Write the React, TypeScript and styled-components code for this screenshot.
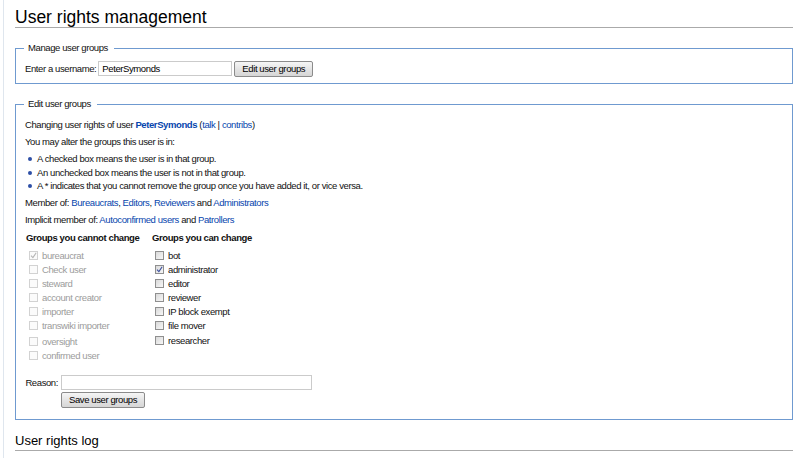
import React from "react";
import styled, { createGlobalStyle } from "styled-components";

const Global = createGlobalStyle`
  html, body { margin: 0; padding: 0; background: #fff; }
  body {
    font-family: "Liberation Sans", Arial, sans-serif;
    font-size: 9.5px;
    letter-spacing: -0.4px;
    color: #111;
  }
`;

const Page = styled.div`
  margin-left: 3px;
  border-left: 1px solid #dfe6ee;
  padding: 0 7px 0 11px;
  min-height: 100vh;
  box-sizing: border-box;
`;

const Title = styled.h1`
  margin: 0;
  padding-top: 7px;
  font-size: 17.5px;
  line-height: 20px;
  font-weight: normal;
  letter-spacing: 0;
  color: #000;
  border-bottom: 1px solid #aaa;
`;

const SubTitle = styled.h2`
  margin: 13px 0 0;
  padding-bottom: 1px;
  font-size: 13px;
  line-height: 16px;
  font-weight: normal;
  letter-spacing: 0;
  color: #000;
  border-bottom: 1px solid #aaa;
`;

const Fieldset = styled.fieldset<{ $pb: number }>`
  margin: 14px 0 0;
  padding: 6px 9px ${(p) => p.$pb}px 9px;
  border: 1px solid #6f9ad0;
  min-width: 0;
`;

const Legend = styled.legend`
  padding: 0 6px 0 4px;
  margin-left: -1px;
  line-height: 12px;
`;

const InlineRow = styled.div`
  display: flex;
  align-items: center;
  height: 17px;
`;

const Label = styled.label`
  margin-right: 2px;
  white-space: nowrap;
`;

const TextInput = styled.input<{ $w: number }>`
  box-sizing: border-box;
  width: ${(p) => p.$w}px;
  height: 15px;
  border: 1px solid #cbcbcb;
  padding: 0 3px;
  margin: 0;
  font-family: "Liberation Sans", Arial, sans-serif;
  font-size: 9.5px;
  letter-spacing: -0.4px;
  color: #000;
  background: #fff;
  outline: none;
`;

const Button = styled.button`
  box-sizing: border-box;
  height: 16px;
  padding: 0 7px;
  margin: 0 0 0 2px;
  border: 1px solid #8b8b8b;
  border-radius: 2px;
  background: linear-gradient(#f6f6f6, #e4e4e4 50%, #d6d6d6);
  font-family: "Liberation Sans", Arial, sans-serif;
  font-size: 9.5px;
  letter-spacing: -0.4px;
  color: #000;
  line-height: 14px;
  white-space: nowrap;
`;

const Para = styled.p<{ $top?: number }>`
  margin: ${(p) => p.$top ?? 0}px 0 3.5px;
  line-height: 13.5px;
`;

const List = styled.ul`
  margin: 0 0 3.5px;
  padding: 0 0 0 12px;
  list-style: none;
`;

const Item = styled.li`
  position: relative;
  line-height: 13.5px;
  &::before {
    content: "";
    position: absolute;
    left: -9px;
    top: 5px;
    width: 4px;
    height: 4px;
    border-radius: 50%;
    background: #2d4fa6;
  }
`;

const Link = styled.a<{ $bold?: boolean }>`
  color: #0645ad;
  text-decoration: none;
  font-weight: ${(p) => (p.$bold ? "bold" : "normal")};
  cursor: pointer;
`;

const Groups = styled.div`
  display: grid;
  grid-template-columns: 126px auto;
  margin-top: 4.5px;
  padding-left: 1px;
`;

const Column = styled.div`
  display: flex;
  flex-direction: column;
`;

const ColumnHead = styled.div`
  font-weight: bold;
  line-height: 14px;
  margin-bottom: 3px;
  white-space: nowrap;
`;

const GroupRow = styled.div<{ $extra?: number; $disabled?: boolean }>`
  display: flex;
  align-items: center;
  height: 14px;
  margin-top: ${(p) => p.$extra ?? 0}px;
  color: ${(p) => (p.$disabled ? "#9c9c9c" : "#111")};
  white-space: nowrap;
`;

const Box = styled.span<{ $disabled?: boolean }>`
  box-sizing: border-box;
  width: 9px;
  height: 9px;
  margin: 0 4px 0 3px;
  flex: none;
  display: inline-flex;
  align-items: center;
  justify-content: center;
  border: 1px solid ${(p) => (p.$disabled ? "#d2d2d2" : "#8f8f8f")};
  background: ${(p) =>
    p.$disabled ? "#fbfbfb" : "linear-gradient(135deg, #d9d9d9, #f7f7f7)"};
`;

const ReasonGrid = styled.div`
  display: grid;
  grid-template-columns: 33px 251px;
  column-gap: 3px;
  row-gap: 2px;
  margin-top: 13px;
  align-items: center;
`;

const ReasonLabel = styled.label`
  justify-self: end;
`;

const SaveCell = styled.div`
  grid-column: 2;
  display: flex;
  & > button {
    margin-left: 0;
  }
`;

function Check({ checked, disabled }: { checked?: boolean; disabled?: boolean }) {
  return (
    <Box $disabled={disabled}>
      {checked && (
        <svg width="7" height="7" viewBox="0 0 7 7">
          <path
            d="M1 3.6 L2.9 5.6 L6.2 0.8"
            fill="none"
            stroke={disabled ? "#b5b5b5" : "#3b4f9e"}
            strokeWidth="1.1"
          />
        </svg>
      )}
    </Box>
  );
}

const cannot: { name: string; checked?: boolean }[] = [
  { name: "bureaucrat", checked: true },
  { name: "Check user" },
  { name: "steward" },
  { name: "account creator" },
  { name: "importer" },
  { name: "transwiki importer" },
  { name: "oversight" },
  { name: "confirmed user" },
];

const can: { name: string; checked?: boolean }[] = [
  { name: "bot" },
  { name: "administrator", checked: true },
  { name: "editor" },
  { name: "reviewer" },
  { name: "IP block exempt" },
  { name: "file mover" },
  { name: "researcher" },
];

export default function App() {
  return (
    <>
      <Global />
      <Page>
        <Title>User rights management</Title>

        <Fieldset $pb={6}>
          <Legend>Manage user groups</Legend>
          <InlineRow>
            <Label>Enter a username:</Label>
            <TextInput $w={134} defaultValue="PeterSymonds" />
            <Button>Edit user groups</Button>
          </InlineRow>
        </Fieldset>

        <Fieldset $pb={11}>
          <Legend>Edit user groups</Legend>
          <Para $top={2}>
            Changing user rights of user <Link $bold>PeterSymonds</Link> (
            <Link>talk</Link> | <Link>contribs</Link>)
          </Para>
          <Para>You may alter the groups this user is in:</Para>
          <List>
            <Item>A checked box means the user is in that group.</Item>
            <Item>An unchecked box means the user is not in that group.</Item>
            <Item>
              A * indicates that you cannot remove the group once you have added it, or vice
              versa.
            </Item>
          </List>
          <Para>
            Member of: <Link>Bureaucrats</Link>, <Link>Editors</Link>, <Link>Reviewers</Link> and{" "}
            <Link>Administrators</Link>
          </Para>
          <Para>
            Implicit member of: <Link>Autoconfirmed users</Link> and <Link>Patrollers</Link>
          </Para>

          <Groups>
            <Column>
              <ColumnHead>Groups you cannot change</ColumnHead>
              {cannot.map((g, i) => (
                <GroupRow key={g.name} $disabled $extra={i === 6 ? 2 : 0}>
                  <Check checked={g.checked} disabled />
                  {g.name}
                </GroupRow>
              ))}
            </Column>
            <Column>
              <ColumnHead>Groups you can change</ColumnHead>
              {can.map((g, i) => (
                <GroupRow key={g.name} $extra={i === 6 ? 1 : 0}>
                  <Check checked={g.checked} />
                  {g.name}
                </GroupRow>
              ))}
            </Column>
          </Groups>

          <ReasonGrid>
            <ReasonLabel>Reason:</ReasonLabel>
            <TextInput $w={251} />
            <SaveCell>
              <Button>Save user groups</Button>
            </SaveCell>
          </ReasonGrid>
        </Fieldset>

        <SubTitle>User rights log</SubTitle>
      </Page>
    </>
  );
}
